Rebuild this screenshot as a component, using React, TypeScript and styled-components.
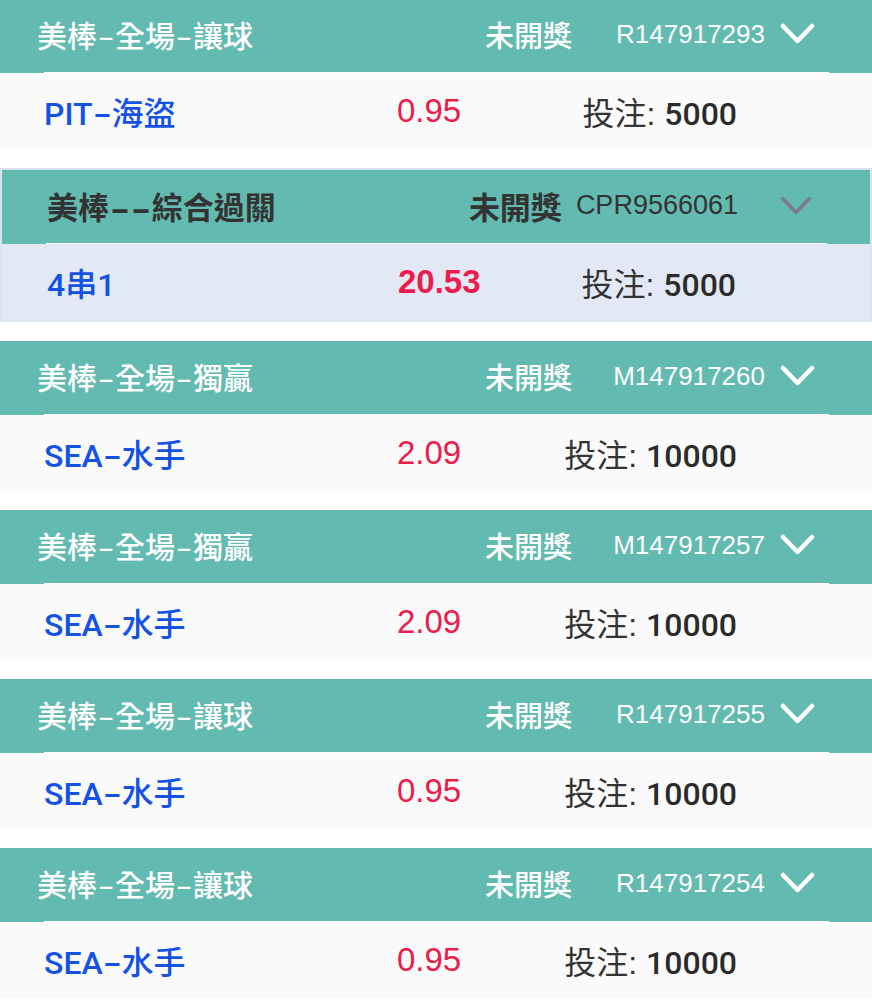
import React from "react";
import styled, { createGlobalStyle } from "styled-components";

const TEAL = "#63bab0";

const GlobalStyle = createGlobalStyle`
  body {
    margin: 0;
    background: #fff;
    font-family: "Liberation Sans", "Noto Sans CJK TC", sans-serif;
  }
`;

type Bet = {
  title: string;
  status: string;
  id: string;
  team: string;
  odds: string;
  stake: string;
  selected?: boolean;
};

const bets: Bet[] = [
  { title: "美棒-全場-讓球", status: "未開獎", id: "R147917293", team: "PIT-海盜", odds: "0.95", stake: "5000" },
  { title: "美棒--綜合過關", status: "未開獎", id: "CPR9566061", team: "4串1", odds: "20.53", stake: "5000", selected: true },
  { title: "美棒-全場-獨贏", status: "未開獎", id: "M147917260", team: "SEA-水手", odds: "2.09", stake: "10000" },
  { title: "美棒-全場-獨贏", status: "未開獎", id: "M147917257", team: "SEA-水手", odds: "2.09", stake: "10000" },
  { title: "美棒-全場-讓球", status: "未開獎", id: "R147917255", team: "SEA-水手", odds: "0.95", stake: "10000" },
  { title: "美棒-全場-讓球", status: "未開獎", id: "R147917254", team: "SEA-水手", odds: "0.95", stake: "10000" },
];

const List = styled.div`
  display: flex;
  flex-direction: column;
  gap: 19px;
  margin-top: -1px;
`;

const Card = styled.section<{ $selected?: boolean }>`
  border: ${(p) => (p.$selected ? "2px solid #d9e4ec" : "none")};
`;

const Header = styled.header<{ $selected?: boolean }>`
  display: flex;
  align-items: center;
  height: 73px;
  padding: ${(p) => (p.$selected ? "0 58px 2px 45px" : "0 57px 3px 37px")};
  box-sizing: border-box;
  background: ${TEAL};
  color: ${(p) => (p.$selected ? "#333" : "#fff")};
`;

const Title = styled.div<{ $selected?: boolean }>`
  flex: 1;
  font-size: ${(p) => (p.$selected ? "31px" : "30px")};
  font-weight: ${(p) => (p.$selected ? 700 : 500)};
`;

// the hyphens in the reference font are long, so stretch them
const Dash = styled.span<{ $tight?: boolean }>`
  display: inline-block;
  transform: scaleX(${(p) => (p.$tight ? 1.9 : 1.7)});
  margin: ${(p) => (p.$tight ? "0 5.5px" : "0 4px")};
`;

const Status = styled.span<{ $selected?: boolean }>`
  font-size: ${(p) => (p.$selected ? "31px" : "29px")};
  font-weight: ${(p) => (p.$selected ? 700 : 500)};
`;

const Ticket = styled.span<{ $selected?: boolean }>`
  font-size: ${(p) => (p.$selected ? "27px" : "26px")};
  text-align: right;
  width: ${(p) => (p.$selected ? "auto" : "193px")};
  margin-left: ${(p) => (p.$selected ? "14px" : "0")};
`;

const Chevron = styled.svg<{ $selected?: boolean }>`
  flex: none;
  margin-left: ${(p) => (p.$selected ? "42px" : "15px")};
  color: ${(p) => (p.$selected ? "#7d7a8c" : "#fff")};
`;

const Rule = styled.div`
  height: 1px;
  background: #fff;
  border-left: 44px solid ${TEAL};
  border-right: 43px solid ${TEAL};
`;

const Body = styled.div<{ $selected?: boolean }>`
  display: grid;
  grid-template-columns: ${(p) => (p.$selected ? "351px" : "353px")} 1fr auto;
  align-items: center;
  height: 76px;
  padding: ${(p) => (p.$selected ? "0 134px 1px 45px" : "0 135px 1px 44px")};
  box-sizing: border-box;
  background: ${(p) => (p.$selected ? "#e3e9f4" : "#fafafa")};
  font-size: 32px;
`;

const Team = styled.span`
  font-family: Roboto, "Noto Sans CJK TC", sans-serif;
  color: #1452e6;
  font-weight: 500;
`;

const Odds = styled.span<{ $selected?: boolean }>`
  color: #ec1c4c;
  font-size: 33px;
  font-weight: ${(p) => (p.$selected ? 700 : 400)};
`;

const Stake = styled.span`
  color: #333;
  text-align: right;

  b {
    font-family: Roboto, sans-serif;
    color: #2b2b2b;
    font-weight: 500;
    font-size: 32px;
  }
`;

const withDashes = (text: string, tight?: boolean) =>
  text.split("-").map((part, i) => (
    <React.Fragment key={i}>
      {i > 0 && <Dash $tight={tight}>-</Dash>}
      {part}
    </React.Fragment>
  ));

const ChevronIcon: React.FC<{ selected?: boolean }> = ({ selected }) => (
  <Chevron
    $selected={selected}
    width={selected ? 32 : 35}
    height="22"
    viewBox="0 0 35 22"
    fill="none"
  >
    <polyline
      points="3,3 17.5,18 32,3"
      stroke="currentColor"
      strokeWidth={selected ? 4 : 4.5}
      strokeLinecap="round"
      strokeLinejoin="round"
    />
  </Chevron>
);

const App: React.FC = () => (
  <>
    <GlobalStyle />
    <List>
      {bets.map((bet, i) => (
        <Card key={i} $selected={bet.selected}>
          <Header $selected={bet.selected}>
            <Title $selected={bet.selected}>{withDashes(bet.title, bet.selected)}</Title>
            <Status $selected={bet.selected}>{bet.status}</Status>
            <Ticket $selected={bet.selected}>{bet.id}</Ticket>
            <ChevronIcon selected={bet.selected} />
          </Header>
          <Rule />
          <Body $selected={bet.selected}>
            <Team>{withDashes(bet.team)}</Team>
            <Odds $selected={bet.selected}>{bet.odds}</Odds>
            <Stake>
              投注: <b>{bet.stake}</b>
            </Stake>
          </Body>
        </Card>
      ))}
    </List>
  </>
);

export default App;
